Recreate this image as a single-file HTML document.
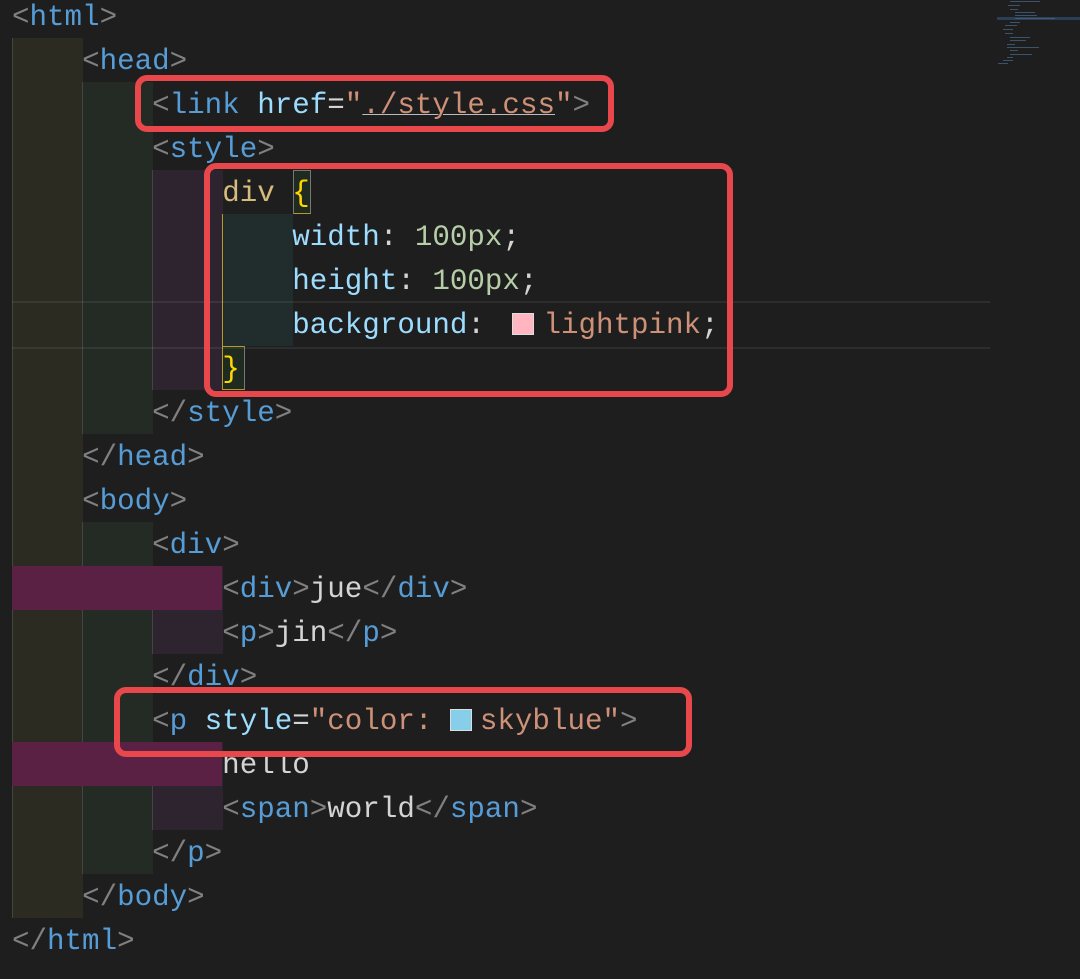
<!DOCTYPE html>
<html><head><meta charset="utf-8"><style>
html,body{margin:0;padding:0;background:#1e1e1e;width:1080px;height:979px;overflow:hidden;position:relative}
.bg{position:absolute}
.l{position:absolute;left:12px;height:44px;line-height:44px;font-family:"Liberation Mono","DejaVu Sans Mono",monospace;font-size:29.2px;white-space:pre;color:#d4d4d4;margin-top:2px}
.p{color:#808080}.t{color:#569cd6}.a{color:#9cdcfe}.s{color:#ce9178}.sel{color:#d7ba7d}.b{color:#ffd700}.n{color:#b5cea8}
.sw{display:inline-block;width:20px;height:20px;border:1px solid #ddd;vertical-align:-2px;margin:0 9px 0 10px}
.box{position:absolute;border:6px solid #e8484b;border-radius:12px;box-sizing:border-box}
.m{position:absolute;height:1px;background:#4a6a8a;opacity:.7}
</style></head><body>
<div class="bg" style="left:12px;top:38px;width:70px;height:880px;background:#2b2b21;border-left:1px solid #444"></div>
<div class="bg" style="left:82px;top:82px;width:70px;height:352px;background:#242b25;border-left:1px solid #444"></div>
<div class="bg" style="left:82px;top:522px;width:70px;height:352px;background:#242b25;border-left:1px solid #444"></div>
<div class="bg" style="left:152px;top:170px;width:70px;height:220px;background:#2e2430;border-left:1px solid #444"></div>
<div class="bg" style="left:152px;top:566px;width:70px;height:88px;background:#2e2430;border-left:1px solid #444"></div>
<div class="bg" style="left:152px;top:742px;width:70px;height:88px;background:#2e2430;border-left:1px solid #444"></div>
<div class="bg" style="left:222px;top:214px;width:70px;height:132px;background:#212c2d;border-left:1px solid #b59a2a"></div>
<div class="bg" style="left:222px;top:346px;width:23px;height:44px;border:1px solid #b59a2a;border-right-color:#777;box-sizing:border-box;background:#1f2a21"></div>
<div class="bg" style="left:293px;top:170px;width:18px;height:44px;border:1px solid #777;border-bottom-color:#b59a2a;box-sizing:border-box;background:#1f2a21"></div>
<div class="bg" style="left:12px;top:566px;width:210px;height:44px;background:#5a2144"></div>
<div class="bg" style="left:12px;top:742px;width:210px;height:44px;background:#5a2144"></div>
<div class="bg" style="left:12px;top:301px;width:978px;height:44px;border-top:2px solid rgba(255,255,255,0.07);border-bottom:2px solid rgba(255,255,255,0.07)"></div>

<!-- minimap -->
<div class="bg" style="left:997px;top:17px;width:83px;height:3px;background:#2a3f55"></div>
<div class="m" style="left:1010px;top:1px;width:30px"></div>
<div class="m" style="left:1008px;top:5px;width:12px"></div>
<div class="m" style="left:1010px;top:9px;width:8px"></div>
<div class="m" style="left:1015px;top:12px;width:20px"></div>
<div class="m" style="left:1015px;top:15px;width:22px"></div>
<div class="m" style="left:1015px;top:18px;width:40px"></div>
<div class="m" style="left:1010px;top:22px;width:10px"></div>
<div class="m" style="left:1005px;top:25px;width:12px"></div>
<div class="m" style="left:1003px;top:29px;width:10px"></div>
<div class="m" style="left:1005px;top:33px;width:8px"></div>
<div class="m" style="left:1010px;top:37px;width:20px"></div>
<div class="m" style="left:1010px;top:40px;width:16px"></div>
<div class="m" style="left:1007px;top:44px;width:8px"></div>
<div class="m" style="left:1007px;top:47px;width:32px"></div>
<div class="m" style="left:1010px;top:50px;width:8px"></div>
<div class="m" style="left:1010px;top:54px;width:22px"></div>
<div class="m" style="left:1007px;top:57px;width:6px"></div>
<div class="m" style="left:1003px;top:60px;width:10px"></div>
<div class="m" style="left:998px;top:63px;width:10px"></div>

<div class="l" style="top:-6px"><span class="p">&lt;</span><span class="t">html</span><span class="p">&gt;</span></div>
<div class="l" style="top:38px">    <span class="p">&lt;</span><span class="t">head</span><span class="p">&gt;</span></div>
<div class="l" style="top:82px">        <span class="p">&lt;</span><span class="t">link</span> <span class="a">href</span>=<span class="s">"<u style="text-decoration-color:#bbb;text-decoration-thickness:1px">./style.css</u>"</span><span class="p">&gt;</span></div>
<div class="l" style="top:126px">        <span class="p">&lt;</span><span class="t">style</span><span class="p">&gt;</span></div>
<div class="l" style="top:170px">            <span class="sel">div</span> <span class="b">{</span></div>
<div class="l" style="top:214px">                <span class="a">width</span>: <span class="n">100px</span>;</div>
<div class="l" style="top:258px">                <span class="a">height</span>: <span class="n">100px</span>;</div>
<div class="l" style="top:302px">                <span class="a">background</span>: <span class="sw" style="background:#ffb6c1"></span><span class="s">lightpink</span>;</div>
<div class="l" style="top:346px">            <span class="b">}</span></div>
<div class="l" style="top:390px">        <span class="p">&lt;/</span><span class="t">style</span><span class="p">&gt;</span></div>
<div class="l" style="top:434px">    <span class="p">&lt;/</span><span class="t">head</span><span class="p">&gt;</span></div>
<div class="l" style="top:478px">    <span class="p">&lt;</span><span class="t">body</span><span class="p">&gt;</span></div>
<div class="l" style="top:522px">        <span class="p">&lt;</span><span class="t">div</span><span class="p">&gt;</span></div>
<div class="l" style="top:566px">            <span class="p">&lt;</span><span class="t">div</span><span class="p">&gt;</span>jue<span class="p">&lt;/</span><span class="t">div</span><span class="p">&gt;</span></div>
<div class="l" style="top:610px">            <span class="p">&lt;</span><span class="t">p</span><span class="p">&gt;</span>jin<span class="p">&lt;/</span><span class="t">p</span><span class="p">&gt;</span></div>
<div class="l" style="top:654px">        <span class="p">&lt;/</span><span class="t">div</span><span class="p">&gt;</span></div>
<div class="l" style="top:698px">        <span class="p">&lt;</span><span class="t">p</span> <span class="a">style</span>=<span class="s">"color: </span><span class="sw" style="background:#87ceeb;margin:0 8px 0 0"></span><span class="s">skyblue"</span><span class="p">&gt;</span></div>
<div class="l" style="top:742px">            hello</div>
<div class="l" style="top:786px">            <span class="p">&lt;</span><span class="t">span</span><span class="p">&gt;</span>world<span class="p">&lt;/</span><span class="t">span</span><span class="p">&gt;</span></div>
<div class="l" style="top:830px">        <span class="p">&lt;/</span><span class="t">p</span><span class="p">&gt;</span></div>
<div class="l" style="top:874px">    <span class="p">&lt;/</span><span class="t">body</span><span class="p">&gt;</span></div>
<div class="l" style="top:918px"><span class="p">&lt;/</span><span class="t">html</span><span class="p">&gt;</span></div>

<div class="box" style="left:135px;top:75px;width:479px;height:57px"></div>
<div class="box" style="left:204px;top:163px;width:529px;height:234px"></div>
<div class="box" style="left:114px;top:687px;width:578px;height:70px"></div>
</body></html>
